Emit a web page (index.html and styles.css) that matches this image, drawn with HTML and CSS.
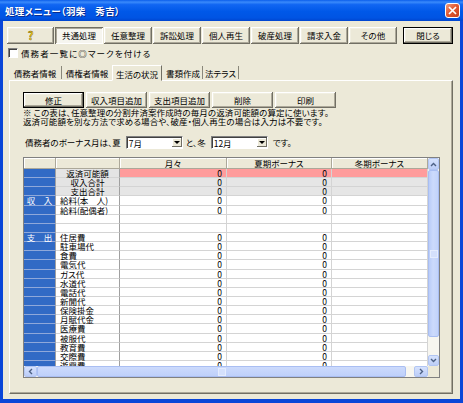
FILE: index.html
```html
<!DOCTYPE html>
<html lang="ja">
<head>
    <meta charset="UTF-8">
    <title>処理メニュー</title>
    <link rel="stylesheet" href="styles.css">
</head>
<body>
    <div class="window">
        <div class="titlebar">
            <span class="title">処理メニュー（羽柴　秀吉）</span>
            <span class="close-x">
                <svg width="9" height="9" viewBox="0 0 9 9"><path d="M1 1L8 8M8 1L1 8" stroke="#fff" stroke-width="1.7" fill="none"/></svg>
            </span>
        </div>

        <div class="client">
            <div class="toolbar">
                <button class="btn help">?</button>
                <button class="btn pressed">共通処理</button>
                <button class="btn">任意整理</button>
                <button class="btn">訴訟処理</button>
                <button class="btn">個人再生</button>
                <button class="btn">破産処理</button>
                <button class="btn">請求入金</button>
                <button class="btn">その他</button>
                <button class="btn default quit">閉じる</button>
            </div>

            <div class="check"><span class="check-box"></span><span class="check-label">債務者一覧に◎マークを付ける</span></div>

            <div class="tabs">
                <span class="tab t1 sep">債務者情報</span>
                <span class="tab t2">債権者情報</span>
                <span class="tab t3 active">生活の状況</span>
                <span class="tab t4 sep">書類作成</span>
                <span class="tab t5 sep">法テラス</span>
            </div>

            <div class="panel">
                <div class="actions">
                    <button class="btn wide default">修正</button>
                    <button class="btn wide">収入項目追加</button>
                    <button class="btn wide">支出項目追加</button>
                    <button class="btn wide">削除</button>
                    <button class="btn wide">印刷</button>
                </div>

                <p class="note">※ この表は、任意整理の分割弁済案作成時の毎月の返済可能額の算定に使います。<br>返済可能額を別な方法で求める場合や、破産・個人再生の場合は入力は不要です。</p>

                <div class="bonus">
                    <span>債務者のボーナス月は、夏</span>
                    <span class="combo"><span class="combo-text">7月</span><span class="combo-btn"></span></span>
                    <span>と、冬</span>
                    <span class="combo"><span class="combo-text">12月</span><span class="combo-btn"></span></span>
                    <span>です。</span>
                </div>

                <div class="grid">
                    <div class="sheet">
                        <div class="row head"><span></span><span></span><span>月々</span><span>夏期ボーナス</span><span>冬期ボーナス</span></div>
                        <div class="row pink sum"><span></span><span>返済可能額</span><span>0</span><span>0</span><span></span></div>
                        <div class="row gray sum"><span></span><span>収入合計</span><span>0</span><span>0</span><span></span></div>
                        <div class="row gray sum"><span></span><span>支出合計</span><span>0</span><span>0</span><span></span></div>
                        <div class="row"><span>収　入</span><span>給料(本　人)</span><span>0</span><span>0</span><span></span></div>
                        <div class="row"><span></span><span>給料(配偶者)</span><span>0</span><span>0</span><span></span></div>
                        <div class="row"><span></span><span></span><span></span><span></span><span></span></div>
                        <div class="row"><span></span><span></span><span></span><span></span><span></span></div>
                        <div class="row"><span>支　出</span><span>住居費</span><span>0</span><span>0</span><span></span></div>
                        <div class="row"><span></span><span>駐車場代</span><span>0</span><span>0</span><span></span></div>
                        <div class="row"><span></span><span>食費</span><span>0</span><span>0</span><span></span></div>
                        <div class="row"><span></span><span>電気代</span><span>0</span><span>0</span><span></span></div>
                        <div class="row"><span></span><span>ガス代</span><span>0</span><span>0</span><span></span></div>
                        <div class="row"><span></span><span>水道代</span><span>0</span><span>0</span><span></span></div>
                        <div class="row"><span></span><span>電話代</span><span>0</span><span>0</span><span></span></div>
                        <div class="row"><span></span><span>新聞代</span><span>0</span><span>0</span><span></span></div>
                        <div class="row"><span></span><span>保険掛金</span><span>0</span><span>0</span><span></span></div>
                        <div class="row"><span></span><span>月賦代金</span><span>0</span><span>0</span><span></span></div>
                        <div class="row"><span></span><span>医療費</span><span>0</span><span>0</span><span></span></div>
                        <div class="row"><span></span><span>被服代</span><span>0</span><span>0</span><span></span></div>
                        <div class="row"><span></span><span>教育費</span><span>0</span><span>0</span><span></span></div>
                        <div class="row"><span></span><span>交際費</span><span>0</span><span>0</span><span></span></div>
                        <div class="row"><span></span><span>遊興費</span><span>0</span><span>0</span><span></span></div>
                    </div>

                    <div class="vscroll">
                        <span class="sb-btn up"><svg width="7" height="5" viewBox="0 0 7 5"><path d="M1 4L3.5 1.5L6 4" stroke="#4D6185" stroke-width="1.4" fill="none"/></svg></span>
                        <span class="thumb v"></span>
                        <span class="track"></span>
                        <span class="sb-btn down"><svg width="7" height="5" viewBox="0 0 7 5"><path d="M1 1L3.5 3.5L6 1" stroke="#4D6185" stroke-width="1.4" fill="none"/></svg></span>
                    </div>

                    <div class="hscroll">
                        <span class="sb-btn left"><svg width="5" height="7" viewBox="0 0 5 7"><path d="M4 1L1.5 3.5L4 6" stroke="#4D6185" stroke-width="1.4" fill="none"/></svg></span>
                        <span class="thumb h"></span>
                        <span class="track"></span>
                        <span class="sb-btn right"><svg width="5" height="7" viewBox="0 0 5 7"><path d="M1 1L3.5 3.5L1 6" stroke="#4D6185" stroke-width="1.4" fill="none"/></svg></span>
                    </div>

                    <div class="corner"></div>
                </div>
            </div>
        </div>
    </div>
</body>
</html>
```

FILE: styles.css
```css
* {
    box-sizing: border-box;
}
body {
    margin: 0;
    font-family: "Noto Sans CJK JP", "Noto Sans", sans-serif;
    font-size: 8.5px;
    font-feature-settings: "palt";
    color: #000;
    background: #ECE9D8;
}
.window {
    width: 463px;
    height: 403px;
    display: flex;
    flex-direction: column;
    background: #0A46D8;
    padding: 0 3px 4px 3px;
}
.titlebar {
    height: 21px;
    margin: 0 -3px;
    padding: 0 3px 0 5px;
    display: flex;
    align-items: center;
    justify-content: space-between;
    background: linear-gradient(#0B5EEB 0%, #3A8AFB 10%, #1166F2 22%, #0058E8 55%, #0054E3 85%, #0045CF 100%);
    color: #fff;
    font-weight: bold;
    font-size: 9.5px;
}
.title {
    text-shadow: 1px 1px #0A2A8C;
    letter-spacing: 0.3px;
}
.close-x {
    width: 15px;
    height: 15px;
    border: 1px solid #fff;
    border-radius: 3px;
    background: linear-gradient(135deg, #F09C80 0%, #E25A33 45%, #C8401C 100%);
    display: flex;
    align-items: center;
    justify-content: center;
}
.client {
    flex: 1;
    background: #ECE9D8;
    padding: 6px 4px 5px 4px;
    display: flex;
    flex-direction: column;
}
.toolbar {
    display: flex;
    gap: 1px;
    height: 17px;
}
.btn {
    width: 48px;
    height: 17px;
    margin: 0;
    padding: 0;
    border: none;
    font: inherit;
    font-feature-settings: "palt";
    color: #000;
    line-height: 15px;
    background: #ECE9D8;
    box-shadow: inset -1px -1px #716F64, inset 1px 1px #FFFFFF, inset -2px -2px #ACA899, inset 2px 2px #F1EFE2;
}
.btn.pressed {
    background: #F6F5EF;
    box-shadow: inset 1px 1px #716F64, inset -1px -1px #FFFFFF, inset 2px 2px #ACA899;
}
.btn.default {
    border: 1px solid #000;
}
.btn.help {
    width: 47px;
    font-weight: bold;
    font-size: 11px;
    color: #F7D21B;
    -webkit-text-stroke: 0.4px #6E5600;
}
.btn.quit {
    width: 50px;
    margin-left: 5px;
}
.check {
    display: flex;
    align-items: center;
    gap: 3px;
    height: 10px;
    margin-top: 4px;
    padding-left: 1px;
    line-height: 10px;
}
.check-label {
    letter-spacing: 1.1px;
}
.check-box {
    width: 10px;
    height: 10px;
    background: #fff;
    border: 1px solid;
    border-color: #808080 #FFFFFF #FFFFFF #808080;
    box-shadow: inset 1px 1px #404040;
}
.tabs {
    display: flex;
    height: 15px;
    margin: 7px 0 0 2px;
    position: relative;
    z-index: 1;
}
.tab {
    text-align: center;
    line-height: 12px;
    padding-top: 1px;
    margin-top: 1px;
    margin-bottom: 1px;
}
.tab.sep {
    border-right: 1px solid #8A877A;
}
.t1 { width: 53px; }
.t2 { width: 50px; }
.t3 { width: 50px; }
.t4 { width: 39px; }
.t5 { width: 36px; }
.tab.active {
    margin: 0 2px 0 0;
    padding-top: 2px;
    line-height: 12px;
    background: #ECE9D8;
    border: 1px solid;
    border-color: #FFFFFF #716F64 transparent #FFFFFF;
    height: 16px;
}
.panel {
    flex: 1;
    margin: 0 3px 0 2px;
    border: 1px solid;
    border-color: #FFFFFF #716F64 #716F64 #FFFFFF;
    box-shadow: inset -1px -1px #ACA899;
    padding: 11px 0 0 13px;
}
.actions {
    display: flex;
    gap: 2px;
}
.btn.wide {
    width: 61px;
    height: 16px;
    line-height: 14px;
}
.note {
    margin: 0;
    line-height: 9px;
    font-size: 8.5px;
    letter-spacing: 0.1px;
}
.bonus {
    display: flex;
    align-items: center;
    height: 13px;
    margin-top: 10px;
    padding-left: 2px;
    line-height: 11px;
}
.combo {
    width: 57px;
    height: 13px;
    margin: 0 3px 0 5px;
    display: flex;
    background: #fff;
    border: 1px solid;
    border-color: #808080 #FFFFFF #FFFFFF #808080;
    box-shadow: inset 1px 1px #404040;
    padding: 1px 0 1px 2px;
}
.combo-text {
    flex: 1;
    line-height: 10px;
}
.combo-btn {
    width: 10px;
    background: #ECE9D8;
    box-shadow: inset -1px -1px #716F64, inset 1px 1px #FFFFFF;
    display: flex;
    align-items: center;
    justify-content: center;
}
.combo-btn::after {
    content: "";
    border-left: 3px solid transparent;
    border-right: 3px solid transparent;
    border-top: 3px solid #000;
}
.combo + span + .combo {
    margin-right: 5px;
}
.grid {
    display: grid;
    grid-template-columns: 404px 11px;
    grid-template-rows: 208px 11px;
    width: 417px;
    margin-top: 8px;
    border: 1px solid #808080;
    background: #fff;
}
.sheet {
    display: grid;
    grid-template-columns: 32px 64px 107px 105px 96px;
    grid-template-rows: 11px;
    grid-auto-rows: 9.15px;
    overflow: hidden;
}
.row {
    display: contents;
}
.row > span {
    border-right: 1px solid #D4D4D4;
    border-bottom: 1px solid #D4D4D4;
    line-height: 8px;
    white-space: nowrap;
    background: #fff;
}
.row > span:nth-child(1) {
    background: #316AC5;
    color: #fff;
    text-align: center;
    border-right-color: #A0A0A0;
    border-bottom-color: #8FA8DA;
}
.row > span:nth-child(2) {
    padding-left: 4px;
    border-right-color: #A0A0A0;
}
.row > span:nth-child(3),
.row > span:nth-child(4) {
    text-align: right;
    padding-right: 4px;
}
.row.sum > span:nth-child(2) {
    text-align: center;
    padding-left: 0;
    background: #E4E4E4;
}
.row.pink > span:nth-child(n+3) {
    background: #FF9C9C;
}
.row.gray > span:nth-child(n+3) {
    background: #E6E6E6;
}
.row.head > span {
    background: #ECE9D8;
    color: #000;
    text-align: center;
    padding: 0;
    line-height: 10px;
    border-right-color: #ACA899;
    border-bottom-color: #ACA899;
    box-shadow: inset 1px 1px #FFFFFF;
}
.vscroll {
    display: flex;
    flex-direction: column;
    background: #F7F6F0;
}
.hscroll {
    display: flex;
    background: #F7F6F0;
}
.sb-btn {
    display: flex;
    align-items: center;
    justify-content: center;
    background: linear-gradient(#D6E2FD, #BCCDF7);
    border: 1px solid #B1C5F3;
    border-radius: 2px;
}
.sb-btn.up { height: 12px; }
.sb-btn.down { height: 11px; }
.sb-btn.left { width: 13px; }
.sb-btn.right { width: 14px; }
.thumb {
    border: 1px solid #A9BEF2;
    border-radius: 2px;
    display: flex;
    align-items: center;
    justify-content: center;
}
.thumb.v {
    height: 167px;
    background: linear-gradient(90deg, #B9CCF8, #CCDAFC 45%, #C2D3FB);
}
.thumb.h {
    width: 369px;
    background: linear-gradient(#CCDAFC, #BED0FA);
}
.thumb::after {
    content: "";
    width: 6px;
    height: 6px;
    border: 1px solid #E4ECFE;
    background: #D4E0FC;
}
.track {
    flex: 1;
}
.corner {
    background: #ECE9D8;
}
```
